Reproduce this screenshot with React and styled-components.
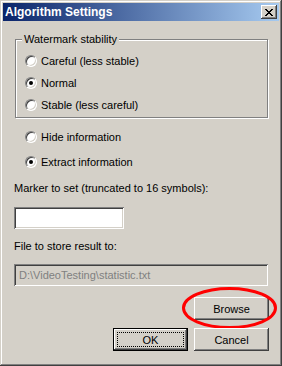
import React from 'react';
import styled, { createGlobalStyle } from 'styled-components';

const GlobalStyle = createGlobalStyle`
  html, body {
    margin: 0;
    padding: 0;
    background: #d4d0c8;
  }
  body {
    font-family: "Liberation Sans", Arial, sans-serif;
    font-size: 11px;
    color: #000;
  }
`;

const raised = `
  box-shadow:
    inset -1px -1px #404040,
    inset 1px 1px #ffffff,
    inset -2px -2px #808080,
    inset 2px 2px #d4d0c8;
`;

const sunken = `
  box-shadow:
    inset 1px 1px #808080,
    inset -1px -1px #ffffff,
    inset 2px 2px #404040,
    inset -2px -2px #d4d0c8;
`;

const Window = styled.div`
  width: 282px;
  height: 366px;
  box-sizing: border-box;
  padding: 3px;
  background: #d4d0c8;
  display: flex;
  flex-direction: column;
  box-shadow:
    inset -1px -1px #404040,
    inset 1px 1px #d4d0c8,
    inset -2px -2px #808080,
    inset 2px 2px #ffffff;
`;

const TitleBar = styled.div`
  height: 18px;
  flex: none;
  display: flex;
  align-items: center;
  justify-content: space-between;
  padding: 0 2px;
  background: linear-gradient(to right, #0a246a, #a6caf0);
`;

const Title = styled.span`
  color: #fff;
  font-weight: bold;
  font-size: 12px;
  line-height: 14px;
`;

const CloseButton = styled.div`
  width: 16px;
  height: 14px;
  box-sizing: border-box;
  background: #d4d0c8;
  display: flex;
  align-items: center;
  justify-content: center;
  ${raised}
`;

const Body = styled.div`
  flex: 1;
  display: flex;
  flex-direction: column;
  padding: 11px 10px 0 11px;
`;

const GroupBox = styled.div`
  position: relative;
  height: 79px;
  box-sizing: border-box;
  margin: 0 1px 0 1px;
  padding: 10px 0 0 9px;
  border: 1px solid #808080;
  box-shadow: inset 1px 1px #fff, 1px 1px #fff;
  margin-top: 7px;
`;

const GroupLabel = styled.span`
  position: absolute;
  top: -8px;
  left: 6px;
  padding: 0 2px;
  line-height: 14px;
  background: #d4d0c8;
`;

const RadioRow = styled.label`
  display: flex;
  align-items: center;
  height: 22px;
  margin-left: ${(p) => p.$indent || 0}px;
  margin-top: ${(p) => p.$gap || 0}px;
`;

const RadioCircle = styled.span`
  position: relative;
  width: 12px;
  height: 12px;
  flex: none;
  box-sizing: border-box;
  border-radius: 50%;
  background: #fff;
  border: 1px solid;
  border-color: #808080 #fff #fff #808080;
  box-shadow: inset 1px 1px #404040, inset -1px -1px #d4d0c8;
  margin-right: 4px;

  &::after {
    content: '';
    display: ${(p) => (p.$checked ? 'block' : 'none')};
    position: absolute;
    left: 3px;
    top: 3px;
    width: 4px;
    height: 4px;
    border-radius: 50%;
    background: #000;
  }
`;

const FieldLabel = styled.div`
  line-height: 13px;
  margin-top: ${(p) => p.$gap}px;
`;

const TextBox = styled.div`
  width: ${(p) => (p.$wide ? 'auto' : '110px')};
  height: 22px;
  box-sizing: border-box;
  margin-top: ${(p) => p.$gap}px;
  margin-right: ${(p) => (p.$wide ? 1 : 0)}px;
  padding: 0 5px;
  display: flex;
  align-items: center;
  background: ${(p) => (p.$disabled ? '#d4d0c8' : '#fff')};
  color: ${(p) => (p.$disabled ? '#808080' : '#000')};
  ${sunken}
`;

const ButtonRow = styled.div`
  display: flex;
  justify-content: flex-end;
  gap: 6px;
  margin-top: ${(p) => p.$gap}px;
`;

const Button = styled.div`
  position: relative;
  width: 75px;
  height: 23px;
  box-sizing: border-box;
  display: flex;
  align-items: center;
  justify-content: center;
  background: #d4d0c8;
  ${(p) =>
    p.$default
      ? `
    border: 1px solid #000;
    box-shadow:
      inset -1px -1px #404040,
      inset 1px 1px #ffffff,
      inset -2px -2px #808080,
      inset 2px 2px #d4d0c8;
  `
      : raised}
`;

const FocusRing = styled.span`
  position: absolute;
  inset: 3px;
  border: 1px dotted #000;
`;

const Highlight = styled.svg`
  position: absolute;
  left: -12px;
  top: -10px;
  overflow: visible;
  pointer-events: none;
`;

const CloseGlyph = () => (
  <svg width="8" height="7" viewBox="0 0 8 7" shapeRendering="crispEdges">
    <path
      fill="#000"
      d="M0 0h2v1H0zM6 0h2v1H6zM1 1h2v1H1zM5 1h2v1H5zM2 2h4v1H2zM3 3h2v1H3zM2 4h4v1H2zM1 5h2v1H1zM5 5h2v1H5zM0 6h2v1H0zM6 6h2v1H6z"
    />
  </svg>
);

const Radio = ({ checked, children, indent, gap }) => (
  <RadioRow $indent={indent} $gap={gap}>
    <RadioCircle $checked={checked} />
    {children}
  </RadioRow>
);

export default function App() {
  return (
    <>
      <GlobalStyle />
      <Window>
        <TitleBar>
          <Title>Algorithm Settings</Title>
          <CloseButton>
            <CloseGlyph />
          </CloseButton>
        </TitleBar>
        <Body>
          <GroupBox>
            <GroupLabel>Watermark stability</GroupLabel>
            <Radio>Careful (less stable)</Radio>
            <Radio checked>Normal</Radio>
            <Radio>Stable (less careful)</Radio>
          </GroupBox>
          <Radio indent={11} gap={8}>Hide information</Radio>
          <Radio indent={11} gap={3} checked>Extract information</Radio>
          <FieldLabel $gap={9}>Marker to set (truncated to 16 symbols):</FieldLabel>
          <TextBox $gap={12} />
          <FieldLabel $gap={11}>File to store result to:</FieldLabel>
          <TextBox $wide $disabled $gap={11}>D:\VideoTesting\statistic.txt</TextBox>
          <ButtonRow $gap={11}>
            <Button>
              Browse
              <Highlight width="95" height="42" viewBox="0 0 95 42">
                <ellipse cx="47.5" cy="21" rx="46" ry="19.5" fill="none" stroke="#f00" strokeWidth="3" />
              </Highlight>
            </Button>
          </ButtonRow>
          <ButtonRow $gap={8}>
            <Button $default>
              OK
              <FocusRing />
            </Button>
            <Button>Cancel</Button>
          </ButtonRow>
        </Body>
      </Window>
    </>
  );
}
